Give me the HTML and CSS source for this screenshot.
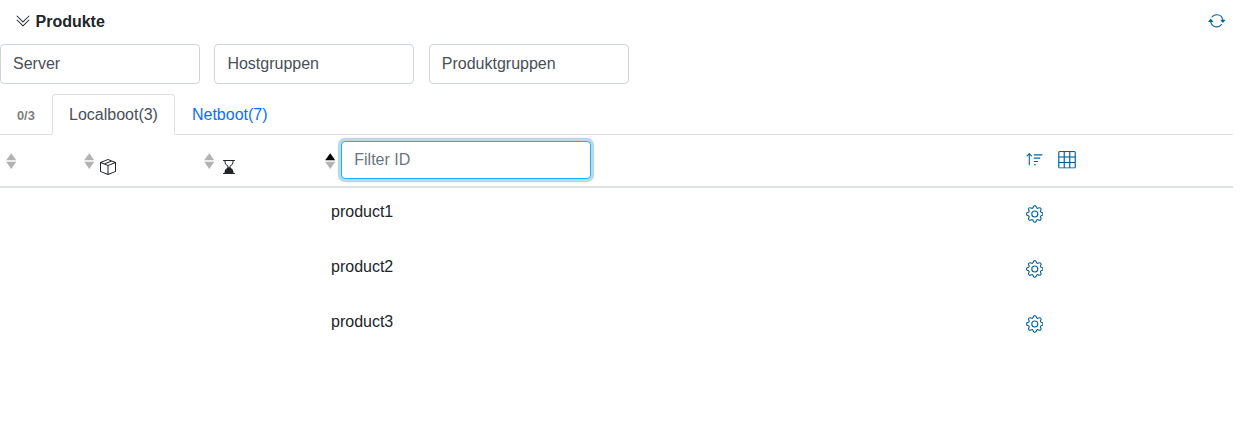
FILE: index.html
```html
<!DOCTYPE html>
<html lang="de">
<head>
<meta charset="utf-8">
<title>Produkte</title>
<link rel="stylesheet" href="styles.css">
</head>
<body>
<svg class="defs" aria-hidden="true">
  <symbol id="chevrons" viewBox="0 0 16 16"><path d="M1.646 6.646a.5.5 0 0 1 .708 0L8 12.293l5.646-5.647a.5.5 0 0 1 .708.708l-6 6a.5.5 0 0 1-.708 0l-6-6a.5.5 0 0 1 0-.708z"/><path d="M1.646 2.646a.5.5 0 0 1 .708 0L8 8.293l5.646-5.647a.5.5 0 0 1 .708.708l-6 6a.5.5 0 0 1-.708 0l-6-6a.5.5 0 0 1 0-.708z"/></symbol>
  <symbol id="repeat" viewBox="0 0 16 16"><path d="M11.534 7h3.932a.25.25 0 0 1 .192.41l-1.966 2.36a.25.25 0 0 1-.384 0l-1.966-2.36a.25.25 0 0 1 .192-.41zm-11 2h3.932a.25.25 0 0 0 .192-.41L2.692 6.23a.25.25 0 0 0-.384 0L.342 8.59A.25.25 0 0 0 .534 9z"/><path d="M8 3c-1.552 0-2.94.707-3.857 1.818a.5.5 0 1 1-.771-.636A6.002 6.002 0 0 1 13.917 7H12.9A5.002 5.002 0 0 0 8 3zM3.1 9a5.002 5.002 0 0 0 8.757 2.182.5.5 0 1 1 .771.636A6.002 6.002 0 0 1 2.083 9H3.1z"/></symbol>
  <symbol id="box" viewBox="0 0 16 16"><path d="M8.186 1.113a.5.5 0 0 0-.372 0L1.846 3.5l2.404.961L10.404 2l-2.218-.887zm3.564 1.426L5.596 5 8 5.961 14.154 3.5l-2.404-.961zm3.25 1.7-6.5 2.6v7.922l6.5-2.6V4.24zM7.5 14.762V6.838L1 4.239v7.923l6.5 2.6zM7.443.184a1.5 1.5 0 0 1 1.114 0l7.129 2.852A.5.5 0 0 1 16 3.5v8.662a1 1 0 0 1-.629.928l-7.185 2.874a.5.5 0 0 1-.372 0L.63 13.09a1 1 0 0 1-.63-.928V3.5a.5.5 0 0 1 .314-.464L7.443.184z"/></symbol>
  <symbol id="hourglass" viewBox="0 0 16 16"><path d="M2 1.5a.5.5 0 0 1 .5-.5h11a.5.5 0 0 1 0 1h-1v1a4.5 4.5 0 0 1-2.557 4.06c-.29.139-.443.377-.443.59v.7c0 .213.154.451.443.59A4.5 4.5 0 0 1 12.5 13v1h1a.5.5 0 0 1 0 1h-11a.5.5 0 1 1 0-1h1v-1a4.5 4.5 0 0 1 2.557-4.06c.29-.139.443-.377.443-.59v-.7c0-.213-.154-.451-.443-.59A4.5 4.5 0 0 1 3.5 3V2h-1a.5.5 0 0 1-.5-.5zm2.5.5v1a3.5 3.5 0 0 0 1.989 3.158c.533.256 1.011.791 1.011 1.491v.702s.18.149.5.149.5-.15.5-.15v-.7c0-.701.478-1.236 1.011-1.492A3.5 3.5 0 0 0 11.5 3V2h-7z"/></symbol>
  <symbol id="sort-up" viewBox="0 0 16 16"><path d="M3.5 12.5a.5.5 0 0 1-1 0V3.707L1.354 4.854a.5.5 0 1 1-.708-.708l2-1.999.007-.007a.498.498 0 0 1 .7.006l2 2a.5.5 0 1 1-.707.708L3.5 3.707V12.5zm3.5-9a.5.5 0 0 1 .5-.5h7a.5.5 0 0 1 0 1h-7a.5.5 0 0 1-.5-.5zM7.5 6a.5.5 0 0 0 0 1h5a.5.5 0 0 0 0-1h-5zm0 3a.5.5 0 0 0 0 1h3a.5.5 0 0 0 0-1h-3zm0 3a.5.5 0 0 0 0 1h1a.5.5 0 0 0 0-1h-1z"/></symbol>
  <symbol id="grid" viewBox="0 0 16 16"><path d="M0 1.5A1.5 1.5 0 0 1 1.5 0h13A1.5 1.5 0 0 1 16 1.5v13a1.5 1.5 0 0 1-1.5 1.5h-13A1.5 1.5 0 0 1 0 14.5v-13zM1.5 1a.5.5 0 0 0-.5.5V5h4V1H1.5zM5 6H1v4h4V6zm1 4h4V6H6v4zm-1 1H1v3.5a.5.5 0 0 0 .5.5H5v-4zm1 0v4h4v-4H6zm5 0v4h3.5a.5.5 0 0 0 .5-.5V11h-4zm0-1h4V6h-4v4zm0-5h4V1.5a.5.5 0 0 0-.5-.5H11v4zm-1 0V1H6v4h4z"/></symbol>
  <symbol id="gear" viewBox="0 0 16 16"><path d="M8 4.754a3.246 3.246 0 1 0 0 6.492 3.246 3.246 0 0 0 0-6.492zM5.754 8a2.246 2.246 0 1 1 4.492 0 2.246 2.246 0 0 1-4.492 0z"/><path d="M9.796 1.343c-.527-1.79-3.065-1.79-3.592 0l-.094.319a.873.873 0 0 1-1.255.52l-.292-.16c-1.64-.892-3.433.902-2.54 2.541l.159.292a.873.873 0 0 1-.52 1.255l-.319.094c-1.79.527-1.79 3.065 0 3.592l.319.094a.873.873 0 0 1 .52 1.255l-.16.292c-.892 1.64.901 3.434 2.541 2.54l.292-.159a.873.873 0 0 1 1.255.52l.094.319c.527 1.79 3.065 1.79 3.592 0l.094-.319a.873.873 0 0 1 1.255-.52l.292.16c1.64.893 3.434-.902 2.54-2.541l-.159-.292a.873.873 0 0 1 .52-1.255l.319-.094c1.79-.527 1.79-3.065 0-3.592l-.319-.094a.873.873 0 0 1-.52-1.255l.16-.292c.893-1.64-.902-3.433-2.541-2.54l-.292.159a.873.873 0 0 1-1.255-.52l-.094-.319zm-2.633.283c.246-.835 1.428-.835 1.674 0l.094.319a1.873 1.873 0 0 0 2.693 1.115l.291-.16c.764-.415 1.6.42 1.184 1.185l-.159.292a1.873 1.873 0 0 0 1.116 2.692l.318.094c.835.246.835 1.428 0 1.674l-.319.094a1.873 1.873 0 0 0-1.115 2.693l.16.291c.415.764-.42 1.6-1.185 1.184l-.291-.159a1.873 1.873 0 0 0-2.693 1.116l-.094.318c-.246.835-1.428.835-1.674 0l-.094-.319a1.873 1.873 0 0 0-2.692-1.115l-.292.16c-.764.415-1.6-.42-1.184-1.185l.159-.291A1.873 1.873 0 0 0 1.945 8.93l-.319-.094c-.835-.246-.835-1.428 0-1.674l.319-.094A1.873 1.873 0 0 0 3.06 4.377l-.16-.292c-.415-.764.42-1.6 1.185-1.184l.292.159a1.873 1.873 0 0 0 2.692-1.115l.094-.319z"/></symbol>
  <symbol id="sort" viewBox="0 0 101 101" preserveAspectRatio="none"><path class="sort-asc" d="M51 1l25 23 24 22H1l25-22z"/><path class="sort-desc" d="M51 101l25-23 24-22H1l25 22z"/></symbol>
</svg>
<main class="page">
  <header class="title-bar">
    <svg class="icon"><use href="#chevrons"/></svg>
    <h1 class="title">Produkte</h1>
    <svg class="icon action refresh"><use href="#repeat"/></svg>
  </header>
  <div class="selects">
    <div class="select">Server</div>
    <div class="select">Hostgruppen</div>
    <div class="select">Produktgruppen</div>
  </div>
  <nav class="tabs">
    <span class="count">0/3</span>
    <a class="tab active">Localboot(3)</a>
    <a class="tab">Netboot(7)</a>
  </nav>
  <section class="table">
    <div class="row head">
      <div class="cell"><svg class="sort"><use href="#sort"/></svg></div>
      <div class="cell"><svg class="sort"><use href="#sort"/></svg><svg class="icon head-icon box"><use href="#box"/></svg></div>
      <div class="cell"><svg class="sort"><use href="#sort"/></svg><svg class="icon head-icon hourglass"><use href="#hourglass"/></svg></div>
      <div class="cell"><svg class="sort ascending"><use href="#sort"/></svg><input class="filter" type="text" placeholder="Filter ID"></div>
      <div class="cell actions"><svg class="icon action"><use href="#sort-up"/></svg><svg class="icon action columns"><use href="#grid"/></svg></div>
    </div>
    <div class="row"><span class="product">product1</span><svg class="icon action gear"><use href="#gear"/></svg></div>
    <div class="row"><span class="product">product2</span><svg class="icon action gear"><use href="#gear"/></svg></div>
    <div class="row"><span class="product">product3</span><svg class="icon action gear"><use href="#gear"/></svg></div>
  </section>
</main>
</body>
</html>
```
FILE: styles.css
```css
* { box-sizing: border-box; }
body {
  margin: 0;
  background: #fff;
  color: #212529;
  font: 16px/24px "Liberation Sans", Arial, sans-serif;
}
.defs { display: none; }
.page { width: 1233px; }
.icon { display: block; flex: none; width: 16px; height: 16px; fill: currentColor; }
.action { width: 17.6px; height: 17.6px; color: #00639c; }

.title-bar { display: flex; align-items: center; height: 44px; padding: 0 7.6px 2px 15px; }
.title { margin: 2px 0 0 4.5px; font-size: 16px; line-height: 24px; font-weight: 700; }
.refresh { margin-left: auto; }

.selects { display: flex; gap: 14.4px; height: 40px; }
.select {
  width: 200px;
  padding: 7px 12px;
  border: 1px solid #ced4da;
  border-radius: 4px;
  color: #495057;
}

.tabs {
  display: flex;
  height: 51px;
  padding-top: 10px;
  border-bottom: 1px solid #dee2e6;
}
.count {
  width: 52px;
  padding: 10px 0 0 17px;
  color: #7f7f7f;
  font-size: 12.8px;
  font-weight: 700;
}
.tab {
  height: 41px;
  padding: 8px 16px;
  border: 1px solid transparent;
  border-radius: 4px 4px 0 0;
  color: #0d6efd;
}
.tab.active {
  border-color: #dee2e6 #dee2e6 #fff;
  background: #fff;
  color: #495057;
}

.row {
  display: grid;
  grid-template-columns: 84px 120px 121px 700.7px 1fr;
  height: 55px;
}
.head {
  height: 53px;
  border-bottom: 2px solid #dee2e6;
}
.cell { display: flex; align-items: flex-start; padding-top: 6px; }
.cell:first-child { padding-left: 6px; }
.sort { flex: none; width: 10.4px; height: 16px; margin-top: 12px; }
.sort-asc { fill: #000; fill-opacity: var(--asc, .3); }
.sort-desc { fill: #000; fill-opacity: .3; }
.ascending { --asc: 1; }
.head-icon { margin-top: 18px; }
.box { margin-left: 5.6px; }
.hourglass { margin-left: 6.6px; }
.filter {
  width: 250px;
  height: 38px;
  margin-left: 5.7px;
  padding: 6px 12px 6px 12.2px;
  border: 1px solid #1ab2ff;
  border-radius: 4px;
  outline: 0;
  background: #fff;
  box-shadow: 0 0 0 3.2px rgba(0, 99, 156, .25);
  font: inherit;
}
.filter::placeholder { color: #6c757d; opacity: 1; }
.actions { gap: 15px; padding-top: 15.8px; }
.columns { width: 18px; stroke: currentColor; stroke-width: .1; overflow: visible; }
.product { grid-column: 4; padding: 12px 0 0 6px; }
.gear { grid-column: 5; height: 18px; margin-top: 17.2px; }
```
